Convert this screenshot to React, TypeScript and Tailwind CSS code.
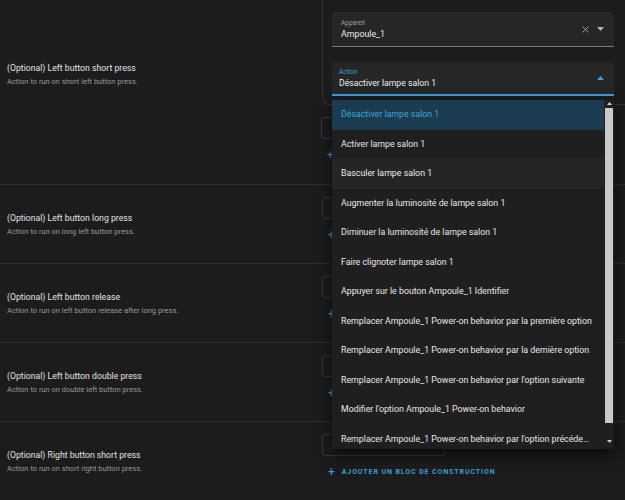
import React from 'react';
import { X } from 'lucide-react';

const rows = [
    { title: '(Optional) Left button long press', desc: 'Action to run on long left button press.' },
    { title: '(Optional) Left button release', desc: 'Action to run on left button release after long press.' },
    { title: '(Optional) Left button double press', desc: 'Action to run on double left button press.' },
    { title: '(Optional) Right button short press', desc: 'Action to run on short right button press.' },
];

const options = [
    'Désactiver lampe salon 1',
    'Activer lampe salon 1',
    'Basculer lampe salon 1',
    'Augmenter la luminosité de lampe salon 1',
    'Diminuer la luminosité de lampe salon 1',
    'Faire clignoter lampe salon 1',
    'Appuyer sur le bouton Ampoule_1 Identifier',
    'Remplacer Ampoule_1 Power-on behavior par la première option',
    'Remplacer Ampoule_1 Power-on behavior par la dernière option',
    "Remplacer Ampoule_1 Power-on behavior par l'option suivante",
    "Modifier l'option Ampoule_1 Power-on behavior",
    "Remplacer Ampoule_1 Power-on behavior par l'option précédente",
];

const Caret: React.FC<{ up?: boolean; color: string }> = ({ up, color }) => (
    <svg width="7" height="4" viewBox="0 0 7 4" className="shrink-0">
        <polygon points={up ? '0,4 7,4 3.5,0' : '0,0 7,0 3.5,4'} fill={color} />
    </svg>
);

const AddButtons: React.FC = () => (
    <>
        <div className="h-[22px] w-[123px] border border-[#383838] rounded-[3px] flex items-center justify-center pl-[14px] text-[#3a9fd8] text-[7px] font-bold tracking-[1px]">
            AJOUTER UNE ACTION
        </div>
        <div className="mt-[10px] h-[12px] pl-[6px] flex items-center gap-[6px] text-[#3a9fd8] text-[7px] font-bold tracking-[0.9px]">
            <span className="text-[12px] font-normal leading-none">+</span>
            AJOUTER UN BLOC DE CONSTRUCTION
        </div>
    </>
);

const RowText: React.FC<{ title: string; desc: string }> = ({ title, desc }) => (
    <div className="flex flex-col gap-[3px]">
        <div className="text-[8.7px] leading-[11px] text-[#e3e3e3]">{title}</div>
        <div className="text-[7.5px] leading-[10px] text-[#9a9a9a]">{desc}</div>
    </div>
);

export default function App() {
    return (
        <div className="relative w-[625px] h-[500px] overflow-hidden bg-[#1c1c1c] font-['Roboto',sans-serif]">
            {/* first row with the open device card */}
            <div className="flex h-[185px] border-b border-[#2d2d2d]">
                <div className="w-[321px] shrink-0 pl-[7px] pt-[63px]">
                    <RowText title="(Optional) Left button short press" desc="Action to run on short left button press." />
                </div>
                <div className="w-[320px] shrink-0 flex flex-col">
                    <div className="h-[105px] ml-[1px] border-x border-b border-[#353535] rounded-b-[8px] pl-[9px] pr-[20px] pt-[12px]">
                        <div className="h-[35px] w-[282px] bg-[#262626] rounded-t-[4px] border-b border-[#7a7a7a] flex items-center pl-[9px] pr-[10px]">
                            <div className="flex-1 flex flex-col">
                                <span className="text-[6.5px] leading-[9px] text-[#a0a0a0]">Appareil</span>
                                <span className="text-[8.8px] leading-[12px] text-[#ececec]">Ampoule_1</span>
                            </div>
                            <X className="w-[11px] h-[11px] text-[#b5b5b5]" strokeWidth={1.8} />
                            <div className="ml-[6px]"><Caret color="#b5b5b5" /></div>
                        </div>
                        <div className="mt-[15px] h-[34px] w-[282px] bg-[#262626] rounded-t-[4px] border-b-2 border-[#3a9fd8] flex items-center pl-[7px] pr-[10px]">
                            <div className="flex-1 flex flex-col">
                                <span className="text-[6.5px] leading-[9px] text-[#3a9fd8]">Action</span>
                                <span className="text-[8.7px] leading-[12px] text-[#ececec]">Désactiver lampe salon 1</span>
                            </div>
                            <Caret up color="#3a9fd8" />
                        </div>
                    </div>
                    <div className="mt-[12px]">
                        <AddButtons />
                    </div>
                </div>
            </div>

            {rows.map((r) => (
                <div key={r.title} className="flex h-[79px] border-b border-[#2d2d2d]">
                    <div className="w-[321px] shrink-0 pl-[7px] pt-[2px] flex items-center">
                        <RowText title={r.title} desc={r.desc} />
                    </div>
                    <div className="pt-[12px] pl-[1px]">
                        <AddButtons />
                    </div>
                </div>
            ))}

            {/* open dropdown menu */}
            <div className="absolute left-[332px] top-[100px] w-[282px] h-[349px] bg-[#1f1f1f] shadow-[0_6px_14px_rgba(0,0,0,0.65)] flex overflow-hidden">
                <div className="flex-1 min-w-0 flex flex-col">
                    {options.map((o, i) => (
                        <div
                            key={o}
                            className={
                                'h-[29.5px] shrink-0 flex items-center pl-[9px] pr-[11px] text-[8.8px] ' +
                                (i === 0
                                    ? 'bg-[#1a3b50] text-[#45a5dc]'
                                    : i === 2
                                    ? 'bg-[#252525] text-[#e8e8e8]'
                                    : 'text-[#e8e8e8]')
                            }
                        >
                            <span className="truncate">{o}</span>
                        </div>
                    ))}
                </div>
                <div className="w-[10px] shrink-0 flex flex-col items-center pt-[2px] pb-[6px]">
                    <svg width="5" height="3" viewBox="0 0 5 3"><polygon points="0,3 5,3 2.5,0" fill="#cfcfcf" /></svg>
                    <div className="mt-[3px] w-[8px] h-[315px] bg-[#c9c9c9]" />
                    <div className="flex-1" />
                    <svg width="5" height="3" viewBox="0 0 5 3"><polygon points="0,0 5,0 2.5,3" fill="#cfcfcf" /></svg>
                </div>
            </div>
        </div>
    );
}
